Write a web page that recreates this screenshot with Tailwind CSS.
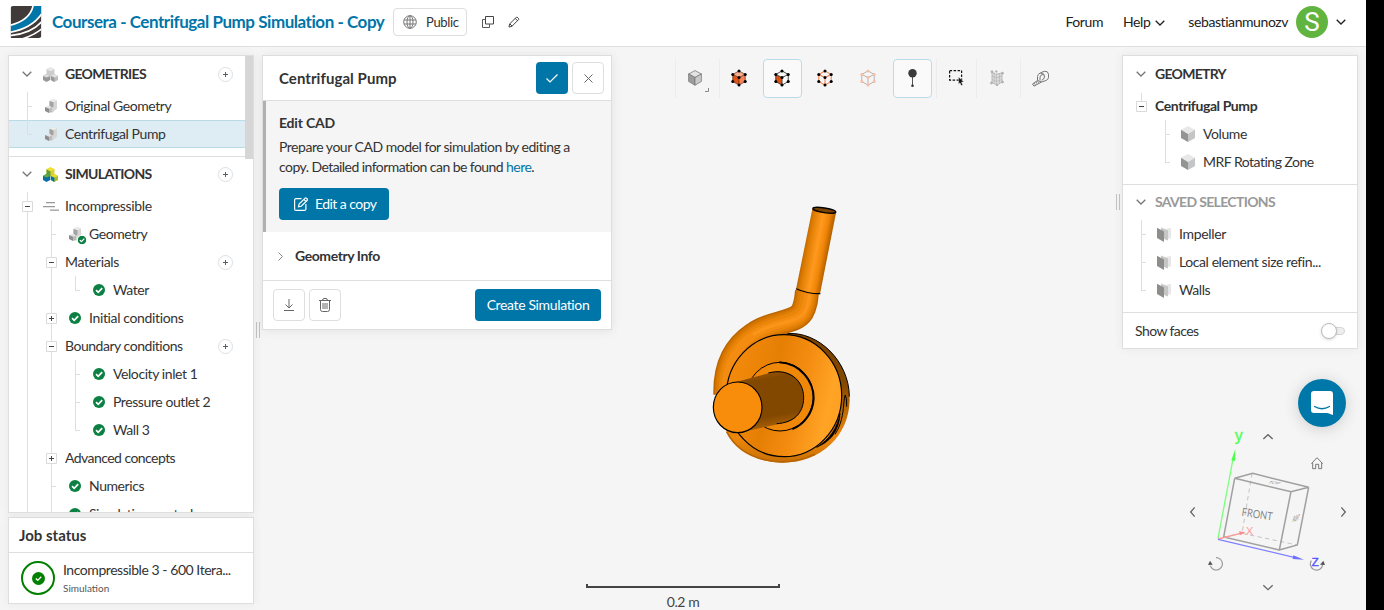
<!DOCTYPE html>
<html lang="en">
<head>
<meta charset="utf-8">
<title>Centrifugal Pump Simulation</title>
<script src="https://cdn.jsdelivr.net/npm/@tailwindcss/browser@4"></script>
</head>
<body class="bg-black overflow-hidden">
<!-- shared symbols -->
<svg class="hidden">
  <symbol id="v" viewBox="0 0 24 28"><path d="M12 0h1v28h-1z" fill="#dedede"/></symbol>
  <symbol id="t" viewBox="0 0 24 28"><path d="M12 0h1v28h-1zM13 14h4v1h-4z" fill="#dedede"/></symbol>
  <symbol id="e" viewBox="0 0 24 28"><path d="M12 0h1v15h-1zM13 14h4v1h-4z" fill="#dedede"/></symbol>
  <symbol id="minus" viewBox="0 0 24 28"><path d="M12 0h1v28h-1z" fill="#dedede"/><path d="M7.500 9.500h10v10h-10z" fill="#fff" stroke="#dadada"/><path d="M10 14h5v1h-5z" fill="#444"/></symbol>
  <symbol id="minusend" viewBox="0 0 24 28"><path d="M12 1h1v9h-1z" fill="#dedede"/><path d="M7.500 9.500h10v10h-10z" fill="#fff" stroke="#dadada"/><path d="M10 14h5v1h-5z" fill="#444"/></symbol>
  <symbol id="plus" viewBox="0 0 24 28"><path d="M12 0h1v28h-1z" fill="#dedede"/><path d="M7.500 9.500h10v10h-10z" fill="#fff" stroke="#dadada"/><path d="M10 14h5v1h-5zM12 12h1v5h-1z" fill="#444"/></symbol>
  <symbol id="ok" viewBox="0 0 12 12"><circle cx="6" cy="6" r="6" fill="#0b8043"/><path d="M3 6.200l2.200 2.100 4-4.200" fill="none" stroke="#fff" stroke-width="1.700"/></symbol>
  <symbol id="add" viewBox="0 0 15 15"><circle cx="7.500" cy="7.500" r="7" fill="#fff" stroke="#dcdfe2"/><path d="M7 5h1v5h-1zM5 7h5v1h-5z" fill="#55606a"/></symbol>
  <symbol id="chev" viewBox="0 0 10 6"><path d="M.7.700l4.300 4.300 4.300-4.300" fill="none" stroke="currentColor" stroke-width="1.300"/></symbol>
  <symbol id="cube" viewBox="0 0 14 16"><path d="M7 0l7 3.800-7 4.200-7-4.200z" fill="#e8e8e8"/><path d="M0 3.800l7 4.200v8l-7-4z" fill="#949492"/><path d="M14 3.800l-7 4.200v8l7-4z" fill="#c4c5c7"/></symbol>
  <symbol id="part" viewBox="0 0 12 14"><path d="M4.500 1.800l3.500-1.800 4 1.200v8.300l-5 4.500-3-4z" fill="#d6d6d6"/><path d="M4.500 1.800l3.500-1.800 4 1.200-3.500 2z" fill="#ececec"/><path d="M4.500 2l4 1.300v4.200l-2 1.500-2-1z" fill="#a2a2a2"/><path d="M0 8l4.500-1.500 2.500 2-3 1.500z" fill="#e2e2e2"/><path d="M0 8l4 1.800v4.200l-4-2z" fill="#8d8d8d"/><path d="M4 9.800l3-1.300v4.500l-3 1z" fill="#bbb"/></symbol>
  <symbol id="faces" viewBox="0 0 14 15"><path d="M8 2l6-1v10l-6 2z" fill="#e6e6e6"/><path d="M4 .5l7 3v10l-7-3z" fill="#c6c6c6"/><path d="M0 .8l7 3.700v10.500l-7-4z" fill="#8d8d8b"/></symbol>
  <symbol id="dots" viewBox="0 0 18 20"><g fill="currentColor"><circle cx="9" cy="2" r="1.700"/><circle cx="2" cy="6" r="1.700"/><circle cx="16" cy="6" r="1.700"/><circle cx="9" cy="9.500" r="1.700"/><circle cx="2" cy="14" r="1.700"/><circle cx="16" cy="14" r="1.700"/><circle cx="9" cy="18" r="1.700"/></g></symbol>
</svg>

<div class="relative flex h-[610px] w-[1366px] flex-col overflow-hidden bg-[#f5f5f5] font-['Lato',sans-serif] text-[14px] leading-5 tracking-[-0.42px] text-[#333]">

  <!-- top bar -->
  <header class="z-10 flex h-[47px] shrink-0 items-center border-b border-[#dedede] bg-white pb-0.5 pl-[10px] pr-[20px]">
    <svg class="h-8 w-8" viewBox="0 0 93 96" fill="none"><clipPath id="lg"><path d="M8 0h85v88q0 8-8 8h-85v-88q0-8 8-8z"/></clipPath><g clip-path="url(#lg)"><path d="M0 0h93v96h-93z" fill="#403b38"/><path d="M68 0h25v24C74 52 46 70 0 77v-18C38 48 62 30 68 0z" fill="#0075a8"/><path d="M68-2C62 30 38 48-2 58M95 22C74 53 46 71-2 79M95 46C72 72 44 85-2 89M95 68C78 82 62 91 34 99" stroke="#fff" stroke-width="5"/></g></svg>
    <h1 class="ml-[10px] w-[333px] whitespace-nowrap text-[17px] font-bold tracking-[-0.46px] text-[#0075a8]">Coursera - Centrifugal Pump Simulation - Copy</h1>
    <div class="ml-2 flex h-7 w-[74px] items-center rounded border border-[#dedede] pl-[9px]">
      <svg class="h-[14px] w-[14px]" viewBox="0 0 14 14" fill="none" stroke="#777"><circle cx="7" cy="7" r="6.300"/><ellipse cx="7" cy="7" rx="3" ry="6.300"/><path d="M7 .7v12.600M1 5h12M1 9h12"/></svg>
      <span class="ml-[9px] text-[13px] tracking-[-0.35px]">Public</span>
    </div>
    <svg class="ml-[15px] h-3 w-3" viewBox="0 0 12 12" fill="none" stroke="#444"><path d="M3.500.5h8v7.500h-8z"/><path d="M3.500 3.500h-3v8h7v-3.500" stroke="#5a5a5a"/></svg>
    <svg class="ml-[14px] h-3 w-3" viewBox="0 0 12 12" fill="none" stroke="#444"><path d="M1 11l.6-3 6.800-6.800c.6-.6 2.900 1.600 2.300 2.300l-6.800 6.800zM7.200 2.400l2.400 2.400M2 8l2.200 2.200"/></svg>
    <nav class="ml-auto flex items-center text-[#222]">
      <span>Forum</span>
      <span class="ml-5">Help</span>
      <svg class="ml-[5px] mt-[1px] h-[6px] w-[10px]"><use href="#chev"/></svg>
      <span class="ml-[23px]">sebastianmunozv</span>
      <span class="ml-2 flex h-8 w-8 items-center justify-center rounded-full bg-[#62b440] font-['Roboto',sans-serif] text-[26px] leading-8 tracking-normal text-white">S</span>
      <svg class="ml-2 h-[6px] w-[10px]"><use href="#chev"/></svg>
    </nav>
  </header>

  <!-- 3D viewport -->
  <div class="absolute inset-0">
    <svg class="absolute left-[700px] top-[195px] h-[280px] w-[170px]" viewBox="0 0 510 840">
      <defs>
        <linearGradient id="pipe" gradientUnits="userSpaceOnUse" x1="310" y1="150" x2="384" y2="164"><stop offset="0" stop-color="#b46100"/><stop offset=".2" stop-color="#df7d03"/><stop offset=".55" stop-color="#ff9a1e"/><stop offset=".8" stop-color="#f08508"/><stop offset="1" stop-color="#b86400"/></linearGradient>
        <linearGradient id="face" x1="0" y1=".3" x2="1" y2=".55"><stop offset="0" stop-color="#f58b0c"/><stop offset=".4" stop-color="#e57f04"/><stop offset=".65" stop-color="#f48c10"/><stop offset=".9" stop-color="#ffa426"/><stop offset="1" stop-color="#ffa020"/></linearGradient>
        <linearGradient id="shaft" x1=".3" y1="0" x2=".5" y2="1"><stop offset="0" stop-color="#a45a00"/><stop offset=".15" stop-color="#834800"/><stop offset=".75" stop-color="#834800"/><stop offset=".93" stop-color="#a86006"/><stop offset="1" stop-color="#d07b08"/></linearGradient>
        <linearGradient id="rim" x1="0" y1="0" x2="0" y2="1"><stop offset="0" stop-color="#7a4300"/><stop offset=".4" stop-color="#854900"/><stop offset=".55" stop-color="#b06203"/><stop offset=".8" stop-color="#ee880c"/><stop offset="1" stop-color="#c87004"/></linearGradient>
      </defs>
      <!-- volute body -->
      <path d="M250 416C350 405 449 490 449 615C447 725 360 803 250 803C170 803 110 765 80 712L60 590C60 480 150 420 250 416z" fill="url(#rim)"/>
      <path d="M80 710C125 800 250 822 345 778" fill="none" stroke="#b96504" stroke-width="5"/>
      <path d="M262 416C355 408 448 500 448 605" fill="none" stroke="#000" stroke-width="3"/>
      <!-- curved pipe: stacked strokes for roundness -->
      <g fill="none">
        <path d="M321 288C319 312 318 330 306 352C284 386 215 378 160 418C100 458 74 520 76 598" stroke="#b96500" stroke-width="72"/>
        <path d="M321 288C319 312 318 330 306 352C284 386 215 378 160 418C100 458 74 520 76 598" stroke="#d27300" stroke-width="64"/>
        <path d="M322 288C320 312 319 330 307 352C285 386 215 380 160 420C100 460 74 520 76 598" stroke="#de7c04" stroke-width="54"/>
        <path d="M324 288C322 312 320 331 308 352C286 386 215 380 160 420C100 460 75 520 77 598" stroke="#e98508" stroke-width="42"/>
        <path d="M327 288C325 312 322 332 310 353C288 387 216 380 160 420C101 460 76 520 78 598" stroke="#f38c10" stroke-width="26"/>
        <path d="M330 288C328 312 325 332 313 353C290 387 217 379 159 419" stroke="#fb951a" stroke-width="10"/>
      </g>
      <path d="M337 42L408 54L360 297Q320 297 288 283z" fill="url(#pipe)"/>
      <path d="M288 281Q325 297 361 296" fill="none" stroke="#000" stroke-width="3.500"/>
      <ellipse cx="373" cy="46" rx="35" ry="7" transform="rotate(9 373 46)" fill="#7a4300" stroke="#000" stroke-width="4"/>
      <!-- front disc -->
      <ellipse cx="252" cy="602" rx="173" ry="183" fill="url(#face)" stroke="#000" stroke-width="3.500"/>
      <path d="M405 718C424 690 429 655 431 630Q433 605 436 600Q441 612 440 635" fill="none" stroke="#000" stroke-width="3"/>
      <path d="M350 757C388 733 412 700 420 655Q420 692 397 724Q378 746 350 757z" fill="#000" stroke="#000" stroke-width="2"/>
      <ellipse cx="240" cy="605" rx="100" ry="103" fill="#ef8709" stroke="#000" stroke-width="3"/>
      <path d="M238 502C303 506 341 560 341 610C339 653 312 690 277 702" fill="none" stroke="#000" stroke-width="6"/>
      <!-- shaft -->
      <path d="M105 562L222 530C275 522 311 560 311 608C311 650 285 680 250 684L122 712z" fill="url(#shaft)"/>
      <path d="M205 534C265 518 311 555 311 608C311 655 280 683 230 686" fill="none" stroke="#000" stroke-width="3"/>
      <ellipse cx="113" cy="637" rx="73" ry="76" fill="#f88d0b" stroke="#000" stroke-width="3.500"/>
    </svg>
    <div class="absolute bottom-0 left-[586px] flex w-[194px] flex-col items-center">
      <div class="h-1 w-full border-x-2 border-b-2 border-[#444]"></div>
      <div class="mt-1 h-[18px] leading-5 text-[#444]">0.2 m</div>
    </div>
  </div>

  <main class="relative flex min-h-0 flex-1 pl-2 pt-2">
    <!-- model tree -->
    <aside class="flex w-[246px] shrink-0 flex-col gap-1">
      <section class="relative h-[458px] overflow-hidden border border-[#dedede] bg-white shadow-[0_0_10px_rgba(0,0,0,0.06)]">
        <div class="absolute right-0 top-0 h-[103px] w-2 bg-[#d6d6d6]"></div>
        <div class="border-b border-[#dedede] pb-2">
          <div class="flex h-9 items-center pl-[13px] font-bold">
            <svg class="h-[6px] w-[10px] text-[#777]"><use href="#chev"/></svg>
            <svg class="ml-[11px] h-[15px] w-[15px]" viewBox="0 0 15 15"><path d="M3.500 2.200l4-2 4 2v5l-4 2-4-2z" fill="#ccc"/><path d="M3.500 2.200l4-2 4 2-4 2z" fill="#e8e8e8"/><path d="M0 9l3.500-2 3.700 2v4l-3.700 2-3.500-2z" fill="#989898"/><path d="M0 9l3.500-2 3.700 2-3.700 1.600z" fill="#ddd"/><path d="M7.800 9l3.500-2 3.700 2v4l-3.700 2-3.500-2z" fill="#bdbdbd"/><path d="M7.800 9l3.500-2 3.700 2-3.700 1.600z" fill="#e2e2e2"/><path d="M7.800 9l3.600 1.700v4.200l-3.600-1.900z" fill="#999"/></svg>
            <span class="ml-[7px] tracking-[-0.7px]">GEOMETRIES</span>
            <svg class="ml-auto mr-5 h-[15px] w-[15px]"><use href="#add"/></svg>
          </div>
          <div class="flex h-7 items-center pl-[6px]"><svg class="h-7 w-6"><use href="#t"/></svg><svg class="ml-[6px] h-[14px] w-3"><use href="#part"/></svg><span class="ml-2">Original Geometry</span></div>
          <div class="mr-2 flex h-7 items-center bg-[#deecf4] pl-[6px] shadow-[inset_0_1px_#bbdae8,inset_0_-1px_#bbdae8]"><svg class="h-7 w-6"><use href="#e"/></svg><svg class="ml-[6px] h-[14px] w-3"><use href="#part"/></svg><span class="ml-2">Centrifugal Pump</span></div>
        </div>
        <div class="mb-px flex h-[34px] items-center pl-[13px] font-bold">
          <svg class="h-[6px] w-[10px] text-[#777]"><use href="#chev"/></svg>
          <svg class="ml-[11px] h-[15px] w-[15px]" viewBox="0 0 15 15"><path d="M3.500 2.200l4-2 4 2v5l-4 2-4-2z" fill="#d9cf35"/><path d="M3.500 2.200l4 2v5l-4-2z" fill="#5f9e3b"/><path d="M3.500 2.200l4-2 4 2-4 2z" fill="#f1e22d"/><path d="M0 9l3.500-2 3.700 2v4l-3.700 2-3.500-2z" fill="#0b6fa4"/><path d="M0 9l3.500-2 3.700 2-3.700 1.600z" fill="#65a943"/><path d="M7.800 9l3.500-2 3.700 2v4l-3.700 2-3.500-2z" fill="#a9bd2a"/><path d="M7.800 9l3.500-2 3.700 2-3.700 1.600z" fill="#e8dc33"/><path d="M7.800 9l3.600 1.700v4.200l-3.600-1.900z" fill="#0b6fa4"/></svg>
          <span class="ml-[7px] tracking-[-0.65px]">SIMULATIONS</span>
          <svg class="ml-auto mr-5 h-[15px] w-[15px]"><use href="#add"/></svg>
        </div>
        <div class="flex flex-col pl-[6px]">
          <div class="flex h-7 items-center"><svg class="h-7 w-6"><use href="#minus"/></svg><svg class="ml-1 h-[9px] w-4" viewBox="0 0 16 9"><path d="M3 0h9v1.200h-9zM0 4h12v1.200h-12zM7 7.500h9v1.200h-9z" fill="#999"/></svg><span class="ml-[6px] tracking-[-0.36px]">Incompressible</span></div>
          <div class="flex h-7 items-center"><svg class="h-7 w-6"><use href="#v"/></svg><svg class="h-7 w-6"><use href="#t"/></svg>
            <span class="relative ml-[6px] h-[14px] w-3"><svg class="h-[14px] w-3"><use href="#part"/></svg><svg class="absolute -right-[6px] -bottom-[4px] h-[10px] w-[10px]" viewBox="-1 -1 14 14"><circle cx="6" cy="6" r="7" fill="#fff"/><use href="#ok" width="12" height="12"/></svg></span><span class="ml-2">Geometry</span></div>
          <div class="flex h-7 items-center"><svg class="h-7 w-6"><use href="#v"/></svg><svg class="h-7 w-6"><use href="#minus"/></svg><span class="ml-[2px] tracking-[-0.3px]">Materials</span><svg class="ml-auto mr-5 h-[15px] w-[15px]"><use href="#add"/></svg></div>
          <div class="flex h-7 items-center"><svg class="h-7 w-6"><use href="#v"/></svg><svg class="h-7 w-6"><use href="#v"/></svg><svg class="h-7 w-6"><use href="#e"/></svg><svg class="ml-[6px] h-3 w-3"><use href="#ok"/></svg><span class="ml-2">Water</span></div>
          <div class="flex h-7 items-center"><svg class="h-7 w-6"><use href="#v"/></svg><svg class="h-7 w-6"><use href="#plus"/></svg><svg class="ml-[6px] h-3 w-3"><use href="#ok"/></svg><span class="ml-2 tracking-[-0.36px]">Initial conditions</span></div>
          <div class="flex h-7 items-center"><svg class="h-7 w-6"><use href="#v"/></svg><svg class="h-7 w-6"><use href="#minus"/></svg><span class="ml-[2px] tracking-[-0.47px]">Boundary conditions</span><svg class="ml-auto mr-5 h-[15px] w-[15px]"><use href="#add"/></svg></div>
          <div class="flex h-7 items-center"><svg class="h-7 w-6"><use href="#v"/></svg><svg class="h-7 w-6"><use href="#v"/></svg><svg class="h-7 w-6"><use href="#t"/></svg><svg class="ml-[6px] h-3 w-3"><use href="#ok"/></svg><span class="ml-2">Velocity inlet 1</span></div>
          <div class="flex h-7 items-center"><svg class="h-7 w-6"><use href="#v"/></svg><svg class="h-7 w-6"><use href="#v"/></svg><svg class="h-7 w-6"><use href="#t"/></svg><svg class="ml-[6px] h-3 w-3"><use href="#ok"/></svg><span class="ml-2">Pressure outlet 2</span></div>
          <div class="flex h-7 items-center"><svg class="h-7 w-6"><use href="#v"/></svg><svg class="h-7 w-6"><use href="#v"/></svg><svg class="h-7 w-6"><use href="#e"/></svg><svg class="ml-[6px] h-3 w-3"><use href="#ok"/></svg><span class="ml-2">Wall 3</span></div>
          <div class="flex h-7 items-center"><svg class="h-7 w-6"><use href="#v"/></svg><svg class="h-7 w-6"><use href="#plus"/></svg><span class="ml-[2px] tracking-[-0.55px]">Advanced concepts</span></div>
          <div class="flex h-7 items-center"><svg class="h-7 w-6"><use href="#v"/></svg><svg class="h-7 w-6"><use href="#t"/></svg><svg class="ml-[6px] h-3 w-3"><use href="#ok"/></svg><span class="ml-2">Numerics</span></div>
          <div class="flex h-7 items-center"><svg class="h-7 w-6"><use href="#v"/></svg><svg class="h-7 w-6"><use href="#t"/></svg><svg class="ml-[6px] h-3 w-3"><use href="#ok"/></svg><span class="ml-2">Simulation control</span></div>
        </div>
      </section>
      <section class="h-[87px] border border-[#dedede] bg-white shadow-[0_0_10px_rgba(0,0,0,0.06)]">
        <h2 class="flex h-[35px] items-center border-b border-[#dedede] pl-[10px] text-[15px] font-bold tracking-normal">Job status</h2>
        <div class="flex h-[50px] items-center pl-3">
          <span class="flex h-[34px] w-[34px] items-center justify-center rounded-full border-2 border-[#008000]"><svg class="h-[13px] w-[13px]" viewBox="0 0 12 12"><circle cx="6" cy="6" r="6" fill="#008000"/><path d="M3.500 6l1.800 1.700 3.200-3.300" fill="none" stroke="#fff" stroke-width="1.200"/></svg></span>
          <div class="ml-2 flex flex-col"><span class="tracking-[-0.45px]">Incompressible 3 - 600 Itera...</span><span class="text-[10px] leading-4 tracking-normal text-[#555]">Simulation</span></div>
        </div>
      </section>
    </aside>

    <div class="mt-[267px] flex h-4 w-[9px] shrink-0 gap-[2px] pl-[2px]"><i class="w-px bg-[#c4c4c4]"></i><i class="w-px bg-[#c4c4c4]"></i></div>

    <!-- geometry settings -->
    <section class="-ml-px h-[275px] w-[350px] shrink-0 border border-[#dedede] bg-white shadow-[0_1px_10px_rgba(0,0,0,0.08)]">
      <div class="flex h-[45px] items-center border-b border-[#dedede] pl-4 pr-[7px]">
        <h2 class="text-[15px] font-bold tracking-[0.06px]">Centrifugal Pump</h2>
        <button class="ml-auto flex h-8 w-8 items-center justify-center rounded bg-[#0075a8]"><svg class="h-[9px] w-3" viewBox="0 0 12 9"><path d="M.5 4.500l3.500 3.500 7.500-7.500" fill="none" stroke="#fff" stroke-width="1.200"/></svg></button>
        <button class="ml-1 flex h-8 w-8 items-center justify-center rounded border border-[#dedede]"><svg class="h-[9px] w-[9px]" viewBox="0 0 9 9"><path d="M.5.500l8 8M8.500.500l-8 8" stroke="#666"/></svg></button>
      </div>
      <div class="h-[131px] border-l-[3px] border-[#b0b0b0] bg-[#f5f5f5] pl-[13px] pt-3">
        <h3 class="font-bold tracking-[-0.2px]">Edit CAD</h3>
        <p class="mt-1 whitespace-nowrap tracking-[-0.48px]">Prepare your CAD model for simulation by editing a<br><span class="tracking-[-0.56px]">copy. Detailed information can be found <a class="text-[#0075a8]">here</a>.</span></p>
        <button class="mt-[11px] flex h-8 w-[110px] items-center rounded bg-[#0075a8] pl-[15px] text-white"><svg class="h-[14px] w-[14px]" viewBox="0 0 14 14" fill="none" stroke="#fff" stroke-width="1.200"><path d="M7.500 1.600h-5.400q-1.500 0-1.500 1.500v8.800q0 1.500 1.500 1.500h8.300q1.500 0 1.500-1.500v-5"/><path d="M4.500 9.800l.6-2.700 5.800-5.800c1-1.200 3.300 1 2.200 2.200l-5.900 5.800zM9.800 2.300l2.200 2.200"/></svg><span class="ml-[7px] tracking-[-0.55px]">Edit a copy</span></button>
      </div>
      <div class="flex h-[49px] items-center border-b border-[#dedede] pl-[15px]"><svg class="h-[9px] w-[5px]" viewBox="0 0 5 9"><path d="M.5.500l4 4-4 4" fill="none" stroke="#888"/></svg><h3 class="ml-3 font-bold">Geometry Info</h3></div>
      <div class="flex h-[48px] items-center pl-[10px] pr-[10px]">
        <button class="flex h-8 w-8 items-center justify-center rounded border border-[#dedede]"><svg class="h-3 w-[10px]" viewBox="0 0 10 12" fill="none" stroke="#666"><path d="M5 0v9M1.500 5.500l3.500 3.500 3.500-3.500M0 11.500h10"/></svg></button>
        <button class="ml-1 flex h-8 w-8 items-center justify-center rounded border border-[#dedede]"><svg class="h-[14px] w-3" viewBox="0 0 12 14" fill="none" stroke="#666"><path d="M0 2.500h12M1.500 2.500v9q0 2 2 2h5q2 0 2-2v-9M3.500 2.500q0-2 1.500-2h2q1.500 0 1.500 2M4 5v6M6 5v6M8 5v6"/></svg></button>
        <button class="ml-auto h-8 w-[126px] rounded bg-[#0075a8] tracking-[-0.36px] text-white">Create Simulation</button>
      </div>
    </section>

    <!-- toolbar -->
    <div class="flex h-[46px] min-w-0 flex-1 items-center pl-[63px]">
      <div class="flex h-[39px] shrink-0 items-center [&>span]:flex [&>span]:h-[39px] [&>span]:shrink-0 [&>span]:items-center [&>span]:justify-center">
        <span class="relative w-[44px] border-l border-[#ececec] pr-[5px]"><svg class="h-4 w-4" viewBox="0 0 16 17" stroke="#777" stroke-width=".8"><path d="M8 .6l6.800 3.600-6.800 3.800-6.800-3.800z" fill="#e3e3e3"/><path d="M1.200 4.200l6.800 3.800v8.200l-6.800-4z" fill="#9d9d9d"/><path d="M14.800 4.200l-6.800 3.800v8.200l6.800-4z" fill="#c9c9c9"/></svg><svg class="absolute bottom-[6px] right-[10px] h-1 w-1" viewBox="0 0 4 4"><path d="M3.500 0v3.500h-3.500" fill="none" stroke="#888"/></svg></span>
        <span class="w-[39px] border-l border-[#ececec]"><svg class="h-[18px] w-4 text-black" viewBox="0 0 18 20"><path d="M9 2l7 4-7 3.500-7-3.500z" fill="#f7ae90"/><path d="M2 6l7 3.500v8.500l-7-4z" fill="#dd5413"/><path d="M16 6l-7 3.500v8.500l7-4z" fill="#f0865a"/><path d="M9 2l7 4v8l-7 4-7-4v-8zM2 6l7 3.500 7-3.500M9 9.500v8.500" fill="none" stroke="#5d2a14" stroke-width=".8"/><svg width="18" height="20"><use href="#dots"/></svg></svg></span>
        <span class="ml-[5px] w-[39px] rounded border border-[#bcdbe9] bg-[#fafafa] pr-px"><svg class="h-[18px] w-4 text-black" viewBox="0 0 18 20"><path d="M2 6l7 3.500v8.500l-7-4z" fill="#dd5413"/><path d="M9 2l7 4v8l-7 4-7-4v-8zM2 6l7 3.500 7-3.500M9 9.500v8.500" fill="none" stroke="#333" stroke-width="1"/><svg width="18" height="20"><use href="#dots"/></svg></svg></span>
        <span class="ml-1 w-[39px] pr-px"><svg class="h-[18px] w-4 text-black" viewBox="0 0 18 20"><path d="M9 2l7 4v8l-7 4-7-4v-8zM2 6l7 3.500 7-3.500M9 9.500v8.500" fill="none" stroke="#f08050" stroke-width="1.200"/><svg width="18" height="20"><use href="#dots"/></svg></svg></span>
        <span class="ml-1 w-[39px] pr-px"><svg class="h-[18px] w-4 text-[#f6bfa8]" viewBox="0 0 18 20"><path d="M9 2l7 4v8l-7 4-7-4v-8zM2 6l7 3.500 7-3.500M9 9.500v8.500" fill="none" stroke="#b5a8a3" stroke-width="1"/><svg width="18" height="20"><use href="#dots"/></svg></svg></span>
        <span class="ml-[5px] w-[39px] rounded border border-[#bcdbe9] bg-[#fafafa]"><svg class="h-[18px] w-[9px]" viewBox="0 0 9 18"><path d="M4.500 7v10" stroke="#555"/><circle cx="4.500" cy="4.300" r="4.200" fill="#3a3a3a"/><circle cx="4.500" cy="16.700" r="1.300" fill="#333"/></svg></span>
        <span class="ml-1 w-[40px] border-l border-[#ececec]"><svg class="h-[16px] w-[15px]" viewBox="0 0 15 16"><path d="M.6.600h12v9.500h-12z" fill="none" stroke="#111" stroke-width="1.200" stroke-dasharray="2.500 1.500"/><path d="M9.600 7l5.200 5-2.300.1 1.200 2.800-1.500.7-1.200-2.800-1.400 1.400z" fill="#111" stroke="#f5f5f5" stroke-width=".4"/></svg></span>
        <span class="w-[44px] border-l border-[#ececec] pr-[3px]"><svg class="h-4 w-[14px]" viewBox="0 0 14 16" fill="#dcdcdc" stroke="#b4b4b4" stroke-width=".9"><path d="M2 2l4 2.200 6-1.200v9l-5 3-5-2.500z"/><path d="M6.500 4.200v10.500M2 6l4.500 2 5.500-2M2 9.500l4.500 2 5.500-2M4.200 3v10.500M9.500 3.500v10" fill="none" stroke-width=".7"/><g fill="#aaa"><circle cx="2" cy="1.800" r="1"/><circle cx="6.300" cy="1.500" r=".8"/><circle cx="12.500" cy="3.200" r="1"/><circle cx="1.500" cy="13" r="1"/><circle cx="12.500" cy="12" r="1"/><circle cx="7" cy="15" r=".9"/></g></svg></span>
        <span class="w-[39px] border-l border-[#ececec]"><svg class="h-[17px] w-[17px]" viewBox="0 0 17 17" fill="none" stroke="#777"><path d="M5.500 10.500v-4q.3-2.600 2.800-3.600l4-1.600q3.900-.5 4.200 2.900v3.300q-.3 2.200-2.500 3l-4.500 1.500z"/><path d="M8 10.500v-3.500q.6-2.500 3-2.500 1.700.3 1.500 2.500-.5 2.500-2.800 3.300M8.500 3.400q2.500-.8 4 1.500"/><path d="M5.500 10.500l-5 3.500 1.500 2.200 7.500-4.200M2.300 13.200l1 1.600M4 12l1 1.600M5.600 11.200l1 1.600"/></svg></span>
      </div>
    </div>

    <div class="mt-[139px] flex h-4 w-[6px] shrink-0 gap-[2px]"><i class="w-px bg-[#c4c4c4]"></i><i class="w-px bg-[#c4c4c4]"></i></div>

    <!-- right column -->
    <aside class="flex w-[244px] shrink-0 flex-col">
      <section class="w-[236px] border border-[#dedede] bg-white shadow-[0_0_10px_rgba(0,0,0,0.06)]">
        <div class="border-b border-[#dedede] pb-2">
          <div class="flex h-9 items-center pl-[13px] font-bold"><svg class="h-[6px] w-[10px] text-[#777]"><use href="#chev"/></svg><span class="ml-[9px] tracking-[-0.7px]">GEOMETRY</span></div>
          <div class="flex h-7 items-center pl-[6px] font-bold"><svg class="h-7 w-6"><use href="#minusend"/></svg><span class="ml-[2px]">Centrifugal Pump</span></div>
          <div class="flex h-7 items-center pl-[30px]"><svg class="h-7 w-6"><use href="#t"/></svg><svg class="ml-1 h-4 w-[14px]"><use href="#cube"/></svg><span class="ml-2">Volume</span></div>
          <div class="flex h-7 items-center pl-[30px]"><svg class="h-7 w-6"><use href="#e"/></svg><svg class="ml-1 h-4 w-[14px]"><use href="#cube"/></svg><span class="ml-2 tracking-[-0.5px]">MRF Rotating Zone</span></div>
        </div>
        <div class="border-b border-[#dedede] pb-2">
          <div class="mb-px flex h-[34px] items-center pl-[13px] font-bold text-[#999]"><svg class="h-[6px] w-[10px] text-[#777]"><use href="#chev"/></svg><span class="ml-[9px] tracking-[-0.67px]">SAVED SELECTIONS</span></div>
          <div class="flex h-7 items-center pl-[6px]"><svg class="h-7 w-6"><use href="#t"/></svg><svg class="ml-1 h-[15px] w-[14px]"><use href="#faces"/></svg><span class="ml-2 tracking-[-0.32px]">Impeller</span></div>
          <div class="flex h-7 items-center pl-[6px]"><svg class="h-7 w-6"><use href="#t"/></svg><svg class="ml-1 h-[15px] w-[14px]"><use href="#faces"/></svg><span class="ml-2">Local element size refin...</span></div>
          <div class="flex h-7 items-center pl-[6px]"><svg class="h-7 w-6"><use href="#e"/></svg><svg class="ml-1 h-[15px] w-[14px]"><use href="#faces"/></svg><span class="ml-2">Walls</span></div>
        </div>
        <div class="flex h-[35px] items-center pl-3 pr-3"><span class="tracking-[-0.58px]">Show faces</span>
          <span class="ml-auto flex h-4 items-center"><i class="z-10 h-4 w-4 rounded-full border border-[#bbb] bg-white shadow-[0_1px_3px_rgba(0,0,0,0.15)]"></i><i class="-ml-2 h-2 w-4 rounded-full border border-[#d5d5d5] bg-[#eee]"></i></span></div>
      </section>

      <button class="ml-[176px] mt-[30px] flex h-12 w-12 shrink-0 items-center justify-center rounded-full bg-[#0077a9] shadow-[0_2px_16px_rgba(0,0,0,0.16)]"><svg class="h-6 w-[22px]" viewBox="0 0 22 24"><path d="M3 0h16q3 0 3 3v21l-5.500-2h-13.500q-3 0-3-3v-16q0-3 3-3z" fill="#fff"/><path d="M3.500 15.500q7.500 4.500 15 0" fill="none" stroke="#0077a9" stroke-width="1.300" stroke-linecap="round"/></svg></button>

      <!-- orientation cube -->
      <svg class="ml-[58px] h-[183px] w-[186px] shrink-0 tracking-normal" viewBox="0 171 558 549" fill="none" font-family="Lato">
        <g stroke="#aaa" stroke-width="3">
          <path d="M216 310L186 490L352 525M186 490L131 501" stroke-dasharray="13 10" stroke="#c4c4c4"/>
          <path d="M164 325L218 310L386 352L333 365zM164 325L131 501L298 540L333 365M386 352L352 525L298 540" stroke-width="4.500" stroke="#a0a0a0"/>
        </g>
        <text x="184" y="437" transform="rotate(9 184 437)" font-size="34" fill="#888" textLength="93" lengthAdjust="spacingAndGlyphs">FRONT</text>
        <text transform="matrix(.7 .08 -.5 .4 262 340)" font-size="24" fill="#888">TOP</text>
        <text transform="matrix(.25 -.1 -.25 1 337 457)" font-size="24" fill="#666">RIGHT</text>
        <path d="M114 505L160 262" stroke="#7dff7d" stroke-width="4"/><path d="M166 237L154 271L165 273z" fill="#4dff4d"/>
        <path d="M114 507L182 490" stroke="#ff9a9a" stroke-width="4"/><path d="M196 487L177 484L180 496z" fill="#ff8a8a"/>
        <path d="M114 508L342 562" stroke="#8080ff" stroke-width="4"/><path d="M372 569L340 556L338 567z" fill="#7070ff"/>
        <g font-family="Liberation Sans"><text x="164" y="214" font-size="48" fill="#4dff4d" stroke="#4dff4d">y</text><text x="197" y="494" font-size="34" fill="#ff9a9a">X</text></g>
        <g stroke="#666" stroke-width="4"><path d="M250 207l14-13 14 13M250 646l14 13 14-13M44 412l-12 14 12 14M484 412l12 14-12 14"/></g>
        <path d="M394 281l17-18 17 18M398 278v18h9v-13h9v13h9v-18" stroke="#777" stroke-width="3"/>
        <path d="M108 563a18.500 18.500 0 1 1-17 24M411 563M394 572a18.500 18.500 0 1 0 34 12" stroke="#999" stroke-width="3.500"/>
        <path d="M84 585l6-13 8 12zM420 584l10-12 5 13z" fill="#555"/>
        <text x="395" y="589" font-family="Liberation Sans" font-size="34" fill="#5555ff" stroke="#5555ff" stroke-width="1.500">Z</text>
      </svg>
    </aside>
  </main>
</div>
</body>
</html>
